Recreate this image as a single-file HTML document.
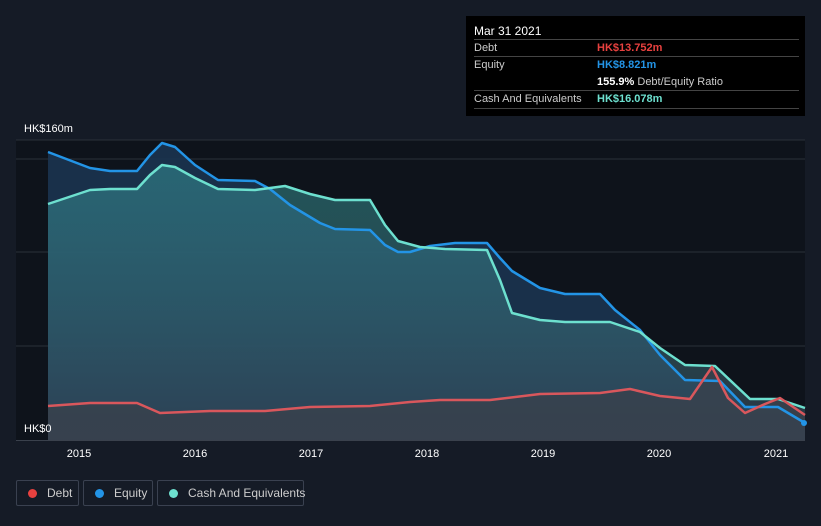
<!DOCTYPE html>
<html><head><style>
body{margin:0;width:821px;height:526px;background:#151b26;font-family:"Liberation Sans",sans-serif;overflow:hidden;position:relative}
.tt{position:absolute;left:466px;top:16px;width:339px;height:100px;background:#000;color:#ccc;font-size:11px}
.tt .r{position:absolute;left:8px;right:6px;border-top:1px solid #444;height:17px;line-height:17px}
.leg{position:absolute;top:480px;height:26px;border:1px solid #3a4150;border-radius:2px;color:#ccc;font-size:12px;line-height:24px;box-sizing:border-box;white-space:nowrap}
.leg i{display:inline-block;width:9px;height:9px;border-radius:50%;margin:0 10px 0 11px;vertical-align:-1px}
</style></head><body>
<svg width="821" height="526" style="position:absolute;left:0;top:0">
<defs>
<linearGradient id="g" x1="0" y1="0" x2="0" y2="1"><stop offset="0" stop-color="#3ba6a6" stop-opacity=".45"/><stop offset="1" stop-color="#3a4a5a" stop-opacity=".6"/></linearGradient>
</defs>
<rect x="16" y="140" width="789" height="300" fill="#0e131b"/>
<g stroke="#2a303a" stroke-width="1"><line x1="16" y1="159" x2="805" y2="159"/><line x1="16" y1="252" x2="805" y2="252"/><line x1="16" y1="346" x2="805" y2="346"/><line x1="16" y1="140" x2="805" y2="140"/></g>
<path d="M48,152 L90,168 110,171 137,171 150,155 162,143 175,147 195,165 218,180 255,181 270,189 290,205 320,223 335,229 370,230 385,245 398,252 410,252 430,246 455,243 487,243 500,258 512,271 540,288 565,294 600,294 615,310 640,330 660,355 685,380 720,381 745,407 778,407 805,423 L805,440 L48,440Z" fill="#1b3450" opacity=".9"/>
<path d="M48,204 L90,190 110,189 137,189 150,175 162,165 175,167 195,178 218,189 255,190 285,186 310,194 335,200 370,200 385,225 398,241 420,247 445,249 487,250 500,280 512,313 540,320 565,322 610,322 640,332 660,348 685,365 715,366 750,399 778,399 805,408 L805,440 L48,440Z" fill="url(#g)"/>
<path d="M48,406 L90,403 137,403 160,413 210,411 265,411 310,407 370,406 410,402 440,400 490,400 540,394 600,393 630,389 660,396 690,399 712,367 728,398 745,413 765,404 780,398 805,415 L805,440 L48,440Z" fill="#3a414c" opacity=".8"/>
<g fill="none" stroke-width="2.5" stroke-linejoin="round">
<polyline stroke="#2394e6" points="48,152 90,168 110,171 137,171 150,155 162,143 175,147 195,165 218,180 255,181 270,189 290,205 320,223 335,229 370,230 385,245 398,252 410,252 430,246 455,243 487,243 500,258 512,271 540,288 565,294 600,294 615,310 640,330 660,355 685,380 720,381 745,407 778,407 805,423"/>
<polyline stroke="#6de0cf" points="48,204 90,190 110,189 137,189 150,175 162,165 175,167 195,178 218,189 255,190 285,186 310,194 335,200 370,200 385,225 398,241 420,247 445,249 487,250 500,280 512,313 540,320 565,322 610,322 640,332 660,348 685,365 715,366 750,399 778,399 805,408"/>
<polyline stroke="#d9575c" points="48,406 90,403 137,403 160,413 210,411 265,411 310,407 370,406 410,402 440,400 490,400 540,394 600,393 630,389 660,396 690,399 712,367 728,398 745,413 765,404 780,398 805,415"/>
</g>
<circle cx="804" cy="423" r="3" fill="#2394e6"/>
<line x1="16" y1="440.5" x2="805" y2="440.5" stroke="#3a414c"/>
<g fill="#fff" font-size="11" text-anchor="middle">
<text x="79" y="457">2015</text><text x="195" y="457">2016</text><text x="311" y="457">2017</text><text x="427" y="457">2018</text><text x="543" y="457">2019</text><text x="659" y="457">2020</text><text x="776" y="457">2021</text>
</g>
<text x="24" y="132" fill="#fff" font-size="11">HK$160m</text>
<text x="24" y="432" fill="#fff" font-size="11">HK$0</text>
</svg>
<div class="tt">
<div style="position:absolute;left:8px;top:8px;color:#fff;font-size:12px">Mar 31 2021</div>
<div class="r" style="top:23px">Debt<span style="position:absolute;left:123px;color:#e8413f;font-weight:bold">HK$13.752m</span></div>
<div class="r" style="top:40px">Equity<span style="position:absolute;left:123px;color:#2394e6;font-weight:bold">HK$8.821m</span><br><span style="position:absolute;left:123px;top:17px;white-space:nowrap"><b style="color:#fff">155.9%</b> Debt/Equity Ratio</span></div>
<div class="r" style="top:74px;border-bottom:1px solid #444">Cash And Equivalents<span style="position:absolute;left:123px;color:#6de0cf;font-weight:bold">HK$16.078m</span></div>
</div>
<div class="leg" style="left:16px;width:63px"><i style="background:#e8413f"></i>Debt</div>
<div class="leg" style="left:83px;width:70px"><i style="background:#2394e6"></i>Equity</div>
<div class="leg" style="left:157px;width:147px"><i style="background:#6de0cf"></i>Cash And Equivalents</div>
</body></html>
